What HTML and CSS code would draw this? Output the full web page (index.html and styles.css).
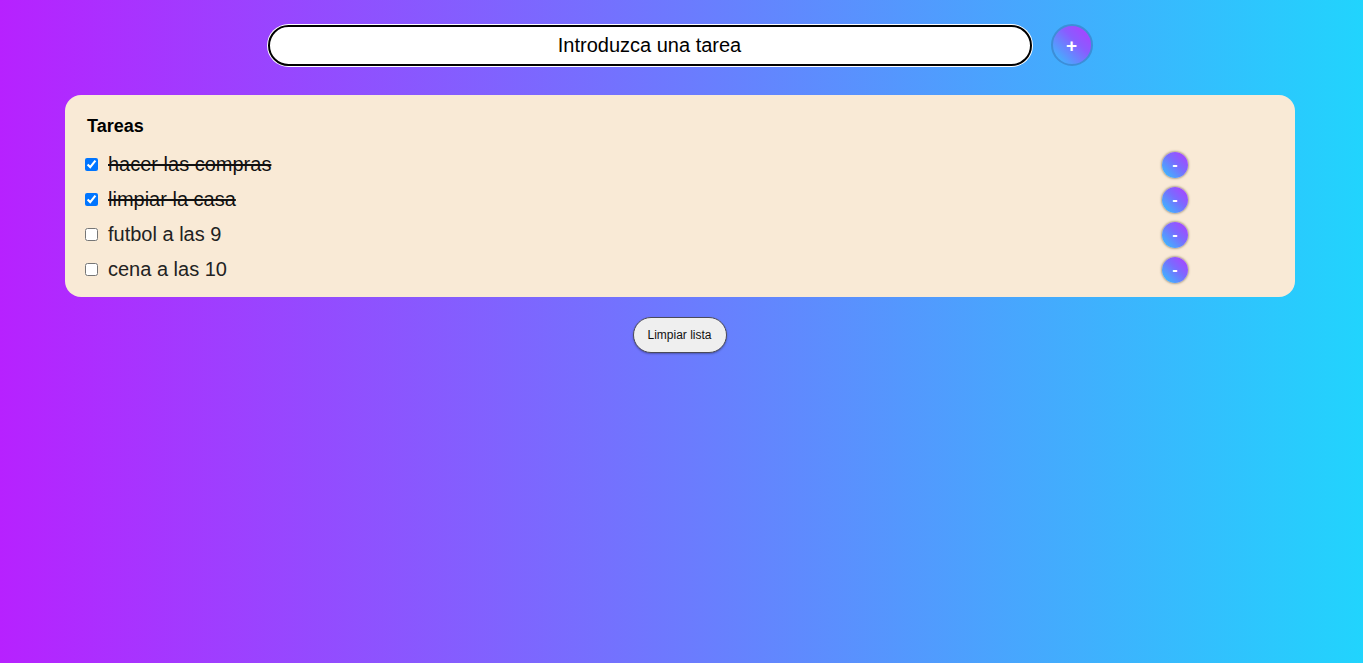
FILE: index.html
```html
<!DOCTYPE html>
<html lang="es">
<head>
<meta charset="utf-8">
<title>Tareas</title>
<link rel="stylesheet" href="styles.css">
</head>
<body>
<div class="top">
  <input class="task-input" type="text" placeholder="Introduzca una tarea">
  <button class="add-btn">+</button>
</div>
<section class="card">
  <h2 class="title">Tareas</h2>
  <ul class="list">
    <li class="item"><label class="lbl"><input type="checkbox" class="chk" checked><span class="txt done">hacer las compras</span></label><button class="del-btn">-</button></li>
    <li class="item"><label class="lbl"><input type="checkbox" class="chk" checked><span class="txt done">limpiar la casa</span></label><button class="del-btn">-</button></li>
    <li class="item"><label class="lbl"><input type="checkbox" class="chk"><span class="txt">futbol a las 9</span></label><button class="del-btn">-</button></li>
    <li class="item"><label class="lbl"><input type="checkbox" class="chk"><span class="txt">cena a las 10</span></label><button class="del-btn">-</button></li>
  </ul>
</section>
<div class="actions">
  <button class="clear-btn">Limpiar lista</button>
</div>
</body>
</html>
```
FILE: styles.css
```css
html, body {
  height: 100%;
}
body {
  margin: 0;
  font-family: "Liberation Sans", Arial, sans-serif;
  background: linear-gradient(to right, #b721ff 0%, #21d4fd 100%);
  overflow: hidden;
}
.top {
  display: flex;
  justify-content: center;
  align-items: center;
  gap: 19px;
  padding-top: 24px;
  padding-right: 3px;
}
.task-input {
  box-sizing: border-box;
  width: 764px;
  height: 41px;
  border: 2px solid #000;
  border-radius: 21px;
  box-shadow: 0 0 0 1px #fff;
  background: #fff;
  text-align: center;
  font-family: "Liberation Sans", Arial, sans-serif;
  font-size: 20px;
  color: #000;
  outline: none;
}
.task-input::placeholder {
  color: #000;
  opacity: 1;
}
.add-btn {
  box-sizing: border-box;
  width: 42px;
  height: 42px;
  border-radius: 50%;
  border: 2px solid #3d8ed8;
  background: linear-gradient(45deg, #30c8fd 0%, #8a5cff 60%, #b23cff 100%);
  color: #fff;
  font-family: "Liberation Sans", Arial, sans-serif;
  font-size: 19px;
  font-weight: bold;
  padding: 0;
  line-height: 1;
}
.card {
  box-sizing: border-box;
  width: 1230px;
  margin: 29px auto 0 65px;
  background: #f9ead6;
  border-radius: 16px;
  padding: 21px 107px 10px 20px;
}
.title {
  margin: 0 0 10px 2px;
  font-size: 18px;
  font-weight: bold;
  line-height: 21px;
  color: #000;
}
.list {
  list-style: none;
  margin: 0;
  padding: 0;
}
.item {
  display: flex;
  justify-content: space-between;
  align-items: center;
  height: 35px;
}
.lbl {
  display: flex;
  align-items: center;
  gap: 10px;
}
.chk {
  margin: 0;
  width: 13px;
  height: 13px;
}
.txt {
  font-size: 20px;
  color: #222;
}
.txt.done {
  text-decoration: line-through;
  color: #111;
}
.del-btn {
  box-sizing: border-box;
  width: 26px;
  height: 26px;
  border-radius: 50%;
  border: none;
  padding: 0;
  background: linear-gradient(45deg, #30c8fd 0%, #7a6bff 55%, #b23cff 100%);
  box-shadow: 0 0 2px 1px rgba(120, 110, 90, 0.55);
  color: #fff;
  font-family: "Liberation Sans", Arial, sans-serif;
  font-size: 16px;
  font-weight: bold;
  line-height: 1;
}
.actions {
  display: flex;
  justify-content: center;
  padding-top: 20px;
  padding-right: 4px;
}
.clear-btn {
  box-sizing: border-box;
  width: 94px;
  height: 36px;
  border-radius: 18px;
  border: 1px solid #4a4a5a;
  background: #efefef;
  color: #111;
  font-family: "Liberation Sans", Arial, sans-serif;
  font-size: 12px;
  padding: 0;
  box-shadow: 0 1px 2px rgba(0,0,0,0.3);
}
```
